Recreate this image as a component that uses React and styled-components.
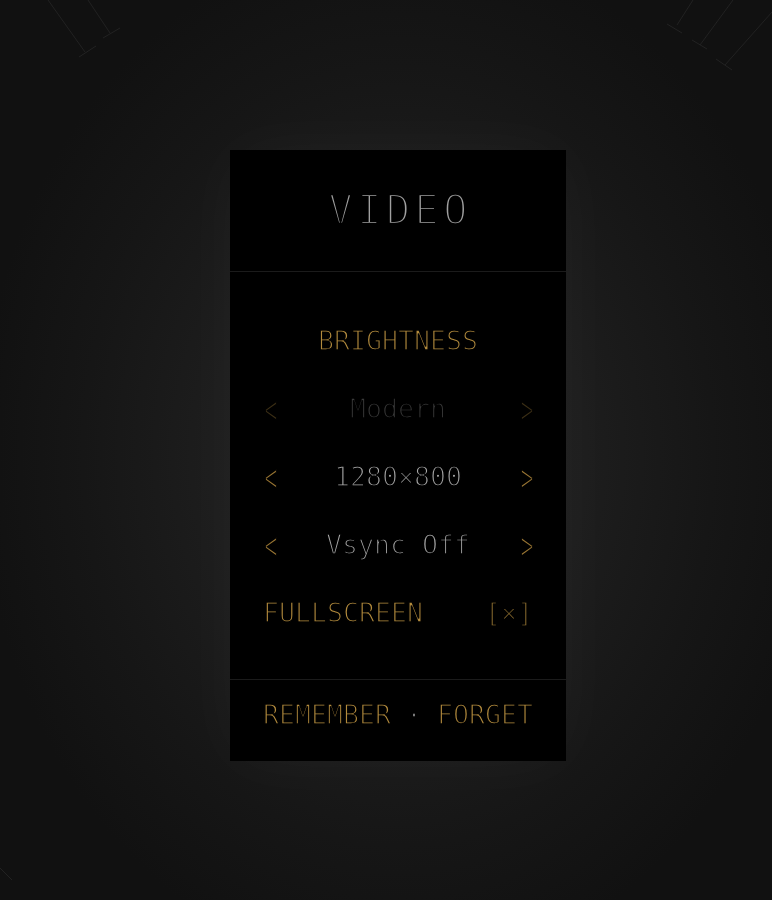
import React, { useState } from 'react';
import styled, { createGlobalStyle } from 'styled-components';

const GlobalStyle = createGlobalStyle`
  html, body {
    margin: 0;
    padding: 0;
    background: #111;
  }
  #root {
    min-height: 900px;
  }
`;

const Screen = styled.div`
  position: relative;
  width: 772px;
  height: 900px;
  overflow: hidden;
  box-sizing: border-box;
  padding: 150px 0 0 230px;
  background: radial-gradient(
    ellipse 420px 520px at 398px 456px,
    #232323 0%,
    #1d1d1d 45%,
    #161616 75%,
    #111111 100%
  );
  font-family: 'DejaVu Sans Mono', 'Liberation Mono', monospace;
  -webkit-font-smoothing: antialiased;
`;

const Decor = styled.svg`
  position: absolute;
  inset: 0;
  pointer-events: none;
`;

const Panel = styled.div`
  position: relative;
  width: 336px;
  background: #000;
  box-shadow: 0 0 70px rgba(255, 255, 255, 0.035);
  display: flex;
  flex-direction: column;
  will-change: transform;
`;

const Title = styled.h1`
  margin: 0;
  height: 122px;
  box-sizing: border-box;
  padding: 0 0 2px 4px;
  line-height: 120px;
  text-align: center;
  font-family: 'DejaVu Sans Mono', monospace;
  font-weight: normal;
  font-size: 41px;
  letter-spacing: 4px;
  color: #a0a0a0;
  -webkit-text-stroke: 2.7px #000;
  border-bottom: 1px solid #1b1b1b;
`;

const Body = styled.div`
  padding: 35px 33px 32px;
  display: flex;
  flex-direction: column;
  border-bottom: 1px solid #1b1b1b;
`;

const Row = styled.div`
  height: 68px;
  line-height: 68px;
  font-size: 26.6px;
  display: flex;
  align-items: center;
  justify-content: ${(p) => p.$align || 'space-between'};
  white-space: pre;
  -webkit-text-stroke: 1.5px #000;
`;

const Label = styled.span`
  color: ${(p) => (p.$dim ? '#3a3a3a' : p.$gold ? '#b38b3d' : '#a9a9a9')};
`;

const Arrow = styled.span`
  display: inline-block;
  width: 14px;
  text-align: center;
  transform: scale(0.8, 1.5);
  -webkit-text-stroke: 1.2px #000;
  color: ${(p) => (p.$dim ? '#3c2f15' : '#9a7633')};
  cursor: pointer;
`;

const Toggle = styled.span`
  color: #9a7834;
  cursor: pointer;
`;

const Footer = styled.div`
  padding: 1px 33px 12px;
`;

const Action = styled.span`
  color: #b38b3d;
  cursor: pointer;
`;

const Dot = styled.span`
  color: #8a8a8a;
`;

const Selector = ({ value, dim, onPrev, onNext }) => (
  <Row>
    <Arrow $dim={dim} onClick={onPrev}>&lt;</Arrow>
    <Label $dim={dim}>{value}</Label>
    <Arrow $dim={dim} onClick={onNext}>&gt;</Arrow>
  </Row>
);

const resolutions = ['1280×800', '1440×900', '1920×1080'];
const syncModes = ['Vsync Off', 'Vsync On'];

export default function App() {
  const [res, setRes] = useState(0);
  const [sync, setSync] = useState(0);
  const [fullscreen, setFullscreen] = useState(true);

  const cycle = (set, list, d) => set((i) => (i + d + list.length) % list.length);

  return (
    <Screen>
      <GlobalStyle />
      <Decor width="772" height="900" viewBox="0 0 772 900">
        <g stroke="#222" strokeWidth="1" fill="none">
          <path d="M48 0 L85 52 M79 57 L96 46" />
          <path d="M88 0 L110 33 M103 38 L120 28" />
          <path d="M693 0 L677 25 M667 24 L682 33" />
          <path d="M733 0 L700 45 M692 40 L707 49" />
          <path d="M772 12 L725 65 M716 59 L732 70" />
          <path d="M0 868 L12 880" />
        </g>
      </Decor>
      <Panel>
        <Title>VIDEO</Title>
        <Body>
          <Row $align="center">
            <Label $gold>BRIGHTNESS</Label>
          </Row>
          <Selector value="Modern" dim />
          <Selector
            value={resolutions[res]}
            onPrev={() => cycle(setRes, resolutions, -1)}
            onNext={() => cycle(setRes, resolutions, 1)}
          />
          <Selector
            value={syncModes[sync]}
            onPrev={() => cycle(setSync, syncModes, -1)}
            onNext={() => cycle(setSync, syncModes, 1)}
          />
          <Row>
            <Label $gold>FULLSCREEN</Label>
            <Toggle onClick={() => setFullscreen(!fullscreen)}>
              {fullscreen ? '[×]' : '[ ]'}
            </Toggle>
          </Row>
        </Body>
        <Footer>
          <Row>
            <Action>REMEMBER</Action>
            <Dot>·</Dot>
            <Action>FORGET</Action>
          </Row>
        </Footer>
      </Panel>
    </Screen>
  );
}
